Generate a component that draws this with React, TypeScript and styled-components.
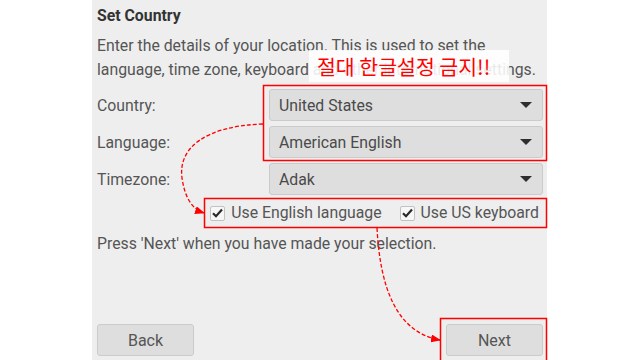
import React from 'react'
import styled, { createGlobalStyle } from 'styled-components'

const GlobalStyle = createGlobalStyle`
  html, body {
    margin: 0;
    padding: 0;
    background: #ffffff;
    font-family: Roboto, "Liberation Sans", sans-serif;
  }
`;

const Page = styled.div`
  position: relative;
  width: 640px;
  height: 360px;
  overflow: hidden;
  display: flex;
  background: #ffffff;
`;

const Panel = styled.div`
  margin-left: 92px;
  width: 455px;
  height: 360px;
  box-sizing: border-box;
  padding: 6px 4px 4px 5px;
  background: #eeeeee;
  display: flex;
  flex-direction: column;
  color: #555555;
  font-size: 15.8px;
`;

const Title = styled.div`
  font-weight: bold;
  color: #333333;
  line-height: 20px;
  height: 20px;
`;

const Intro = styled.p`
  margin: 8px 0 0;
  line-height: 24px;
`;

const FormGrid = styled.div`
  margin-top: 7px;
  display: grid;
  grid-template-columns: 172px 1fr;
  row-gap: 5px;
  align-items: center;
`;

const Label = styled.div`
  line-height: 20px;
  padding-top: 1px;
`;

const Select = styled.div`
  height: 32px;
  box-sizing: border-box;
  border: 1px solid #cbcbcb;
  border-radius: 3px;
  background: #dedede;
  display: flex;
  align-items: center;
  justify-content: space-between;
  padding: 0 10px 0 9px;
  color: #4a4a4a;
`;

const Caret = styled.span`
  width: 0;
  height: 0;
  border-left: 6px solid transparent;
  border-right: 6px solid transparent;
  border-top: 6px solid #2e2e2e;
`;

const CheckRow = styled.div`
  margin-top: 8px;
  height: 20px;
  display: flex;
  justify-content: flex-end;
  align-items: center;
  gap: 18px;
  padding-right: 4px;
`;

const CheckItem = styled.label`
  display: flex;
  align-items: center;
  gap: 6px;
  line-height: 20px;
`;

const Box = styled.span`
  width: 13px;
  height: 13px;
  border: 1px solid #c2c2c2;
  border-radius: 2px;
  background: #f7f7f7;
  display: flex;
  align-items: center;
  justify-content: center;
`;

const Hint = styled.p`
  margin: 11px 0 0;
  line-height: 20px;
`;

const ButtonRow = styled.div`
  margin-top: auto;
  display: flex;
  justify-content: space-between;
`;

const Button = styled.button`
  width: 97px;
  height: 32px;
  border: 1px solid #cbcbcb;
  border-radius: 3px;
  background: #dedede;
  color: #555555;
  font-family: Roboto, "Liberation Sans", sans-serif;
  font-size: 16px;
  padding: 0;
`;

const Note = styled.div`
  position: absolute;
  left: 309px;
  top: 50px;
  width: 200px;
  height: 32px;
  background: rgba(255, 255, 255, 0.88);
  color: #ff0000;
  font-family: "Noto Sans CJK KR", sans-serif;
  font-size: 20.5px;
  line-height: 32px;
  padding-left: 8px;
  box-sizing: border-box;
  white-space: nowrap;
`;

const Overlay = styled.svg`
  position: absolute;
  left: 0;
  top: 0;
  pointer-events: none;
`;

const Check = () => (
  <svg width="11" height="10" viewBox="0 0 11 10">
    <path d="M1 5.2 L4 8.2 L10 1.5" fill="none" stroke="#2a2a2a" strokeWidth="2.2" />
  </svg>
)

export default function App() {
  return (
    <Page>
      <GlobalStyle />
      <Panel>
        <Title>Set Country</Title>
        <Intro>
          Enter the details of your location. This is used to set the
          <br />
          language, time zone, keyboard and other international settings.
        </Intro>
        <FormGrid>
          <Label>Country:</Label>
          <Select>United States<Caret /></Select>
          <Label>Language:</Label>
          <Select>American English<Caret /></Select>
          <Label>Timezone:</Label>
          <Select>Adak<Caret /></Select>
        </FormGrid>
        <CheckRow>
          <CheckItem><Box><Check /></Box>Use English language</CheckItem>
          <CheckItem><Box><Check /></Box>Use US keyboard</CheckItem>
        </CheckRow>
        <Hint>Press 'Next' when you have made your selection.</Hint>
        <ButtonRow>
          <Button>Back</Button>
          <Button>Next</Button>
        </ButtonRow>
      </Panel>
      <Note>절대 한글설정 금지!!</Note>
      <Overlay width="640" height="360" viewBox="0 0 640 360">
        <defs>
          <marker id="tip" markerWidth="10" markerHeight="8" refX="9" refY="4" orient="auto" markerUnits="userSpaceOnUse">
            <path d="M0 0 L10 4 L0 8 Z" fill="#ff0000" />
          </marker>
        </defs>
        <rect x="263.5" y="85.5" width="283" height="75" fill="none" stroke="#ff0000" strokeWidth="1.5" />
        <rect x="204.5" y="198.5" width="342" height="29" fill="none" stroke="#ff0000" strokeWidth="1.5" />
        <rect x="440.5" y="318.5" width="106" height="50" fill="none" stroke="#ff0000" strokeWidth="1.5" />
        <path d="M263 124 C 205 126 178 148 182 178 C 185 198 192 209 204 213" fill="none" stroke="#ff0000" strokeWidth="1.3" strokeDasharray="4 2" markerEnd="url(#tip)" />
        <path d="M377 228 C 380 285 395 332 440 340" fill="none" stroke="#ff0000" strokeWidth="1.3" strokeDasharray="4 2" markerEnd="url(#tip)" />
      </Overlay>
    </Page>
  )
}
